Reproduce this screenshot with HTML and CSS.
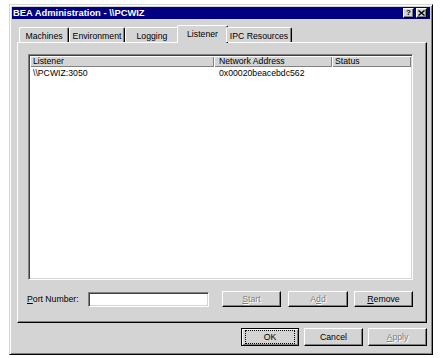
FILE: index.html
```html
<!DOCTYPE html>
<html>
<head>
<meta charset="utf-8">
<link rel="stylesheet" href="styles.css">
</head>
<body>
<div class="window">
  <div class="titlebar">
    <span class="title">BEA Administration - \\PCWIZ</span>
    <div class="tbtns">
      <span class="tbtn help">?</span>
      <span class="tbtn close"><svg width="7" height="6" viewBox="0 0 7 6"><path d="M0.5 0.5 L6.5 5.5 M6.5 0.5 L0.5 5.5" stroke="#000" stroke-width="1.4" fill="none"/></svg></span>
    </div>
  </div>
  <div class="body">
    <div class="tabs">
      <div class="tab t-machines">Machines</div>
      <div class="tab t-env">Environment</div>
      <div class="tab t-log">Logging</div>
      <div class="tab t-listener active">Listener</div>
      <div class="tab t-ipc">IPC Resources</div>
    </div>
    <div class="panel">
      <div class="listview">
        <div class="lv-header">
          <div class="col c1">Listener</div>
          <div class="col c2">Network Address</div>
          <div class="col c3">Status</div>
        </div>
        <div class="lv-row">
          <div class="cell c1">\\PCWIZ:3050</div>
          <div class="cell c2">0x00020beacebdc562</div>
          <div class="cell c3"></div>
        </div>
      </div>
      <div class="port-row">
        <label class="port-label"><u>P</u>ort Number:</label>
        <div class="input"></div>
        <div class="btn small disabled b-start"><span><u>S</u>tart</span></div>
        <div class="btn small disabled b-add"><span>A<u>d</u>d</span></div>
        <div class="btn small b-remove"><span><u>R</u>emove</span></div>
      </div>
    </div>
    <div class="dlg-buttons">
      <div class="btn big default b-ok"><span class="focus">OK</span></div>
      <div class="btn big b-cancel"><span>Cancel</span></div>
      <div class="btn big disabled b-apply"><span><u>A</u>pply</span></div>
    </div>
  </div>
</div>
</body>
</html>
```
FILE: styles.css
```css
body {
  margin: 0;
  background: #fff;
  font-family: "Liberation Sans", Arial, sans-serif;
  font-size: 8.7px;
  color: #000;
}

.window {
  margin: 4px 0 0 9px;
  width: 424px;
  height: 351px;
  box-sizing: border-box;
  background: #d4d4d4;
  border: 1px solid;
  border-color: #d4d4d4 #000 #000 #d4d4d4;
  box-shadow: inset 1px 1px #fff, inset -1px -1px #808080;
  padding: 2px;
  display: flex;
  flex-direction: column;
}

.titlebar {
  height: 12px;
  background: #000080;
  color: #fff;
  display: flex;
  align-items: center;
  justify-content: space-between;
}

.title {
  font-weight: bold;
  font-size: 9.4px;
  padding-left: 1px;
  line-height: 12px;
}

.tbtns {
  display: flex;
  gap: 2px;
  margin-right: 3px;
}

.tbtn {
  width: 11px;
  height: 10px;
  box-sizing: border-box;
  background: #d4d4d4;
  border: 1px solid;
  border-color: #fff #000 #000 #fff;
  box-shadow: inset -1px -1px #808080;
  color: #000;
  display: flex;
  align-items: center;
  justify-content: center;
  font-weight: bold;
  font-size: 8px;
  line-height: 8px;
}

.body {
  flex: 1;
  padding: 7px 3px 0 5px;
  display: flex;
  flex-direction: column;
}

.tabs {
  display: flex;
  align-items: flex-end;
  height: 16px;
  margin-left: 2px;
  position: relative;
  z-index: 1;
}

.tab {
  height: 15px;
  box-sizing: border-box;
  border-top: 1px solid #fff;
  border-left: 1px solid #fff;
  border-right: 1px solid #000;
  box-shadow: inset -1px 0 #808080;
  border-radius: 2px 2px 0 0;
  display: flex;
  align-items: center;
  justify-content: center;
  background: #d4d4d4;
  padding-top: 1px;
}

.t-machines { width: 50px; }
.t-env { width: 56px; }
.t-log { width: 54px; }
.t-listener { width: 51px; }
.t-ipc { width: 66px; }

.tab.active {
  height: 18px;
  margin: 0 -2px -1px -2px;
  padding-bottom: 2px;
}

.panel {
  height: 281px;
  box-sizing: border-box;
  border: 1px solid;
  border-color: #fff #000 #000 #fff;
  box-shadow: inset -1px -1px #808080;
  padding: 11px 13px 0 10px;
}

.listview {
  height: 226px;
  box-sizing: border-box;
  background: #fff;
  border: 1px solid;
  border-color: #808080 #fff #fff #808080;
  box-shadow: inset 1px 1px #404040, inset -1px -1px #d4d4d4;
  padding: 1px;
}

.lv-header {
  display: flex;
  height: 11px;
}

.lv-header .col {
  box-sizing: border-box;
  background: #d4d4d4;
  box-shadow: inset 1px 1px #fff, inset -1px -1px #808080;
  line-height: 11px;
}

.lv-row {
  display: flex;
  height: 13px;
  line-height: 13px;
}

.c1 { width: 184px; padding-left: 3px; box-sizing: border-box; }
.c2 { width: 118px; padding-left: 5px; box-sizing: border-box; }
.c3 { width: 79px; padding-left: 3px; box-sizing: border-box; }

.port-row {
  margin-top: 11px;
  display: flex;
  align-items: center;
  height: 16px;
}

.port-label {
  width: 61px;
  margin-left: -1px;
}

.input {
  width: 121px;
  height: 15px;
  box-sizing: border-box;
  background: #fff;
  border: 1px solid;
  border-color: #808080 #fff #fff #808080;
  box-shadow: inset 1px 1px #404040, inset -1px -1px #d4d4d4;
  margin-right: 13px;
}

.btn {
  box-sizing: border-box;
  background: #d4d4d4;
  border: 1px solid;
  border-color: #fff #000 #000 #fff;
  box-shadow: inset -1px -1px #808080;
  display: flex;
  align-items: center;
  justify-content: center;
}

.btn.small { height: 16px; }
.b-start { width: 59px; margin-right: 7px; }
.b-add { width: 60px; margin-right: 6px; }
.b-remove { width: 59px; }

.btn.disabled {
  color: #808080;
  text-shadow: 1px 1px #fff;
}

.dlg-buttons {
  margin-top: 5px;
  display: flex;
  justify-content: flex-end;
  gap: 5px;
}

.btn.big { height: 18px; }
.b-ok { width: 58px; }
.b-cancel { width: 59px; }
.b-apply { width: 59px; }

.btn.default {
  border-color: #000;
  box-shadow: inset 1px 1px #fff, inset -1px -1px #808080;
}

.focus {
  outline: 1px dotted #000;
  outline-offset: 0;
  width: 48px;
  height: 12px;
  display: flex;
  align-items: center;
  justify-content: center;
}
```
